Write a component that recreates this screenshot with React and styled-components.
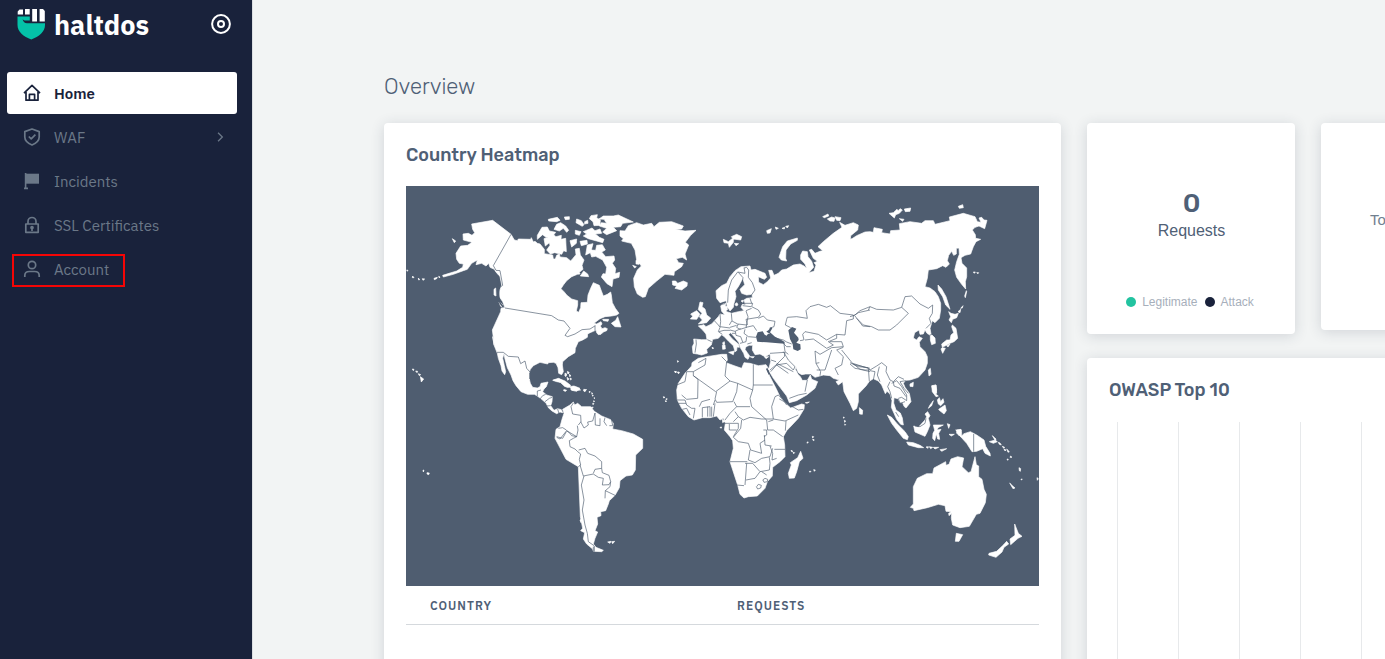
import React from 'react';
import styled, { createGlobalStyle } from 'styled-components';

const Global = createGlobalStyle`
  * { box-sizing: border-box; }
  body { margin: 0; background: #f2f4f4; font-family: "IBM Plex Sans", "Noto Sans", sans-serif; color: #4f6076; }
  h1, h2, p, ul { margin: 0; padding: 0; }
`;

const headingFont = '"Rubik", "Inter", sans-serif';
const plainFont = '"Liberation Sans", Arial, sans-serif';

const Shell = styled.div`
  display: flex;
  height: 100vh;
  overflow: hidden;
`;

const Sidebar = styled.aside`
  flex: 0 0 253px;
  background: #19223b;
  border-right: 1px solid #dcdfe2;
  padding: 0 15px 0 7px;
`;

const Brand = styled.header`
  display: flex;
  align-items: center;
  height: 48px;
  padding: 0 6px 0 10px;
  margin-bottom: 24px;
`;

const BrandName = styled.span`
  flex: 1;
  padding: 2px 0 0 8px;
  color: #fff;
  font-size: 27px;
  font-weight: 700;
  line-height: 46px;
`;

const IconButton = styled.button`
  display: flex;
  padding: 0;
  border: 0;
  background: none;
  color: #fff;
`;

const Menu = styled.ul`
  display: grid;
  gap: 2px;
  list-style: none;
`;

const MenuItem = styled.li`
  position: relative;
`;

const MenuLink = styled.a`
  display: flex;
  align-items: center;
  gap: 13px;
  height: 42px;
  padding: 0 10px 0 16px;
  border-radius: 3px;
  background: ${(p) => (p.$active ? '#fff' : 'transparent')};
  color: ${(p) => (p.$active ? '#19223b' : '#6b7888')};
  font-size: 15px;
  font-weight: ${(p) => (p.$active ? 600 : 400)};
  text-decoration: none;
`;

const MenuLabel = styled.span`
  flex: 1;
`;

const Highlight = styled.span`
  position: absolute;
  left: 5px;
  top: 6px;
  width: 113px;
  height: 33px;
  border: 2px solid #f50505;
  pointer-events: none;
`;

const Main = styled.main`
  flex: 1;
  min-width: 0;
  padding: 72px 0 0 131px;
`;

const PageTitle = styled.h1`
  margin-bottom: 21px;
  font-family: ${headingFont};
  font-size: 22px;
  font-weight: 300;
  line-height: 30px;
`;

const Cards = styled.div`
  display: grid;
  grid-template-columns: minmax(677px, 3fr) minmax(208px, 1fr) minmax(208px, 1fr);
  grid-template-rows: auto 1fr;
  gap: 24px 26px;
  align-items: start;
`;

const Card = styled.section`
  background: #fff;
  border-radius: 4px;
  box-shadow: 0 2px 14px rgba(40, 50, 75, 0.16);
`;

const HeatmapCard = styled(Card)`
  grid-row: 1 / 3;
  min-height: 600px;
  padding: 20px 22px;
`;

const CardTitle = styled.h2`
  font-family: ${headingFont};
  font-size: 18px;
  font-weight: 500;
  line-height: 24px;
`;

const Map = styled.svg`
  display: block;
  width: 100%;
  height: 400px;
  margin-top: 19px;
  background: #4f5d70;
`;

const CountryTable = styled.table`
  width: 100%;
  border-collapse: collapse;
`;

const HeadCell = styled.th`
  width: ${(p) => p.$width};
  height: 38px;
  padding: 2px 24px 0;
  border-bottom: 1px solid #d5d9dd;
  font-size: 12px;
  font-weight: 600;
  letter-spacing: 1px;
  text-align: left;
  text-transform: uppercase;
`;

const StatCard = styled(Card)`
  display: flex;
  flex-direction: column;
  align-items: center;
  height: 211px;
  padding: 64px 0 0 1px;
`;

const StatValue = styled.strong`
  font-family: ${headingFont};
  font-size: 27px;
  font-weight: 500;
  line-height: 33px;
`;

const StatLabel = styled.p`
  font-family: ${plainFont};
  font-size: 16px;
  line-height: 22px;
`;

const Legend = styled.ul`
  display: flex;
  gap: 7px;
  margin-top: 50px;
  padding-right: 3px;
  list-style: none;
`;

const LegendItem = styled.li`
  display: flex;
  align-items: center;
  gap: 6px;
  color: #a7afbb;
  font-family: ${plainFont};
  font-size: 12px;
  line-height: 20px;

  &::before {
    content: '';
    width: 10px;
    height: 10px;
    border-radius: 50%;
    background: ${(p) => p.$color};
  }
`;

const TotalCard = styled(Card)`
  height: 207px;
  padding: 86px 0 0 49px;
  color: #71808f;
  font-family: ${plainFont};
  font-size: 15px;
  line-height: 22px;
`;

const OwaspCard = styled(Card)`
  grid-column: 2 / 4;
  min-height: 360px;
  padding: 20px 22px;
`;

const ChartGrid = styled.div`
  display: grid;
  grid-template-columns: repeat(7, minmax(61px, 1fr));
  height: 300px;
  margin: 20px 0 0 8px;
`;

const GridColumn = styled.span`
  border-left: 1px solid #e7e9eb;
`;

/* The map is drawn on a 1899 x 1200 sheet. Each region keeps its own origin on it. */
const A = [-18, -18]; // North America, west
const B = [282, -18]; // North America, east and Greenland
const C = [792, 12]; // Europe and western Russia
const D = [1332, 12]; // Far East
const E = [402, 552]; // South America
const F = [792, 462]; // Africa and Arabia
const G = [1362, 552]; // Oceania
const H = [252, 447]; // Caribbean
const I = [1152, 402]; // South Asia

const toPoints = ([dx, dy], text) =>
  text.trim().split(/\s+/).map((pair) => {
    const [x, y] = pair.split(',').map(Number);
    return `${x + dx} ${y + dy}`;
  });

const coast = (...legs) => `M${legs.flatMap(([origin, text]) => toPoints(origin, text)).join('L')}Z`;
const shapes = (origin, text) => text.split('/').map((part) => coast([origin, part])).join('');
const lines = (origin, text) => text.split('/').map((part) => `M${toPoints(origin, part).join('L')}`).join('');

const LAND = [
  coast(
    [A, '215,132 278,121 333,163 343,180 352,182 355,177 392,178 394,173 400,186 405,184 412,190 420,192 433,208 433,221 458,225 460,237 466,237 470,226 478,222 480,231 500,233 512,243 518,236 528,224 526,207 538,205 541,225 552,240 546,256 549,268 538,277'],
    [B, '240,282 232,283 215,290 200,302 190,315 183,326 192,335 200,345 215,357 233,362 233,375 229,393 236,397 242,383 243,368 262,367 264,345 272,325 280,308 298,316 303,330 310,348 322,343 332,336 334,345 337,368 346,385 357,400 350,405 335,408 315,410 300,416 288,425 282,430 290,432 303,425 306,432 301,438 306,446 315,443 322,446 320,452 310,456 303,463 295,464 290,458 288,450 280,454 270,458 263,462 262,472 248,480 235,485 226,505 225,518 205,530 188,545 187,555 190,575 185,584 176,580 174,563 168,550 160,547 145,548 143,552 120,547 100,557 91,568 87,580 87,600'],
    [H, '118,132 121,145 128,157 142,159 150,155 153,145 174,141 169,155 162,162 158,170 170,180 187,185 186,200 182,212 192,226 203,221 214,224 218,233 210,231 200,236 186,228 175,218 168,204 155,193 142,183 133,178 113,178 93,170 78,152 69,137 63,120 52,98 44,68 42,55 38,70 43,92 47,110 44,119 36,108 33,92 25,70 22,55 12,30 8,5'],
    [A, '283,495 277,450 302,395 303,385 315,383 308,365 298,350 300,330 305,315 300,290 287,275 283,268 270,262 266,250 258,258 245,250 228,254 232,240 215,250 202,268 190,272 160,283 130,291 128,286 170,273 188,262 190,252 178,250 170,238 168,220 182,198 203,196 216,187 190,180 189,162 205,160 216,166 224,158 218,148']
  ),
  coast(
    [E, '72,130 68,118 90,105 100,96 104,105 113,100 125,110 152,110 163,124 185,138 212,149 220,160 218,177 245,182 280,192 308,208 308,235 287,255 286,300 277,315 258,318 240,332 238,353 225,376 208,392 205,402 197,422 182,425 183,437 171,442 173,462 165,482 173,486 165,505 160,522 168,532 190,541 185,545 160,544 158,537 140,522 130,507 134,488 122,482 128,475 121,440 115,290 78,268 45,205 48,178 60,170 66,148']
  ),
  coast(
    [C, '240,228 243,240 255,238 285,250 290,262 283,268 265,260 266,277 280,284 292,275 302,264 296,241 306,241 312,256 325,250 335,240 350,237 370,225 390,222 402,228 410,235 405,222 392,208 392,195 398,183 412,185 414,200 425,214 431,232 416,248 432,244 438,225 432,218 442,214 430,205 418,180 425,178 435,190 450,184 458,182 444,170 460,155 490,130 516,112 509,97 525,106 550,98 565,105 563,120 542,137 541,148 548,145 560,137 585,126'],
    [D, '60,125 70,127 72,113 97,118 95,128 120,132 122,122 150,120 148,101 180,95 215,100 225,92 250,92 255,103 300,92 298,81 340,70 375,80 382,95 393,97 387,84 395,82 402,90 411,91 404,116 387,108 375,112 367,120 376,134 377,145 392,148 378,155 370,170 362,192 345,196 333,203 336,220 350,234 350,260 346,275 347,297 335,283 320,262 314,240 320,215 328,193 327,174 319,175 319,192 311,196 305,184 296,196 292,212 298,222 288,232 278,227 260,236 235,240 232,265 225,290 240,294 255,305 265,320 272,340 272,360 268,385 255,398 247,392 240,415 243,432 255,444 256,460 245,464 241,450 241,436 231,430 225,420 220,432 210,433 207,420 194,428 190,444 200,450 207,440 217,445 208,457 210,470 225,485 232,500 232,520 225,540 205,562 180,570'],
    [I, '347,181 340,190 345,202 358,220 363,245 348,264 342,259 338,248 330,248 324,236 312,233 311,249 318,270 331,279 337,294 340,315 332,313 320,298 312,280 304,262 306,242 300,222 291,214 286,221 275,195 265,183 250,176 238,184 228,198 205,222 205,245 200,265 190,272 180,250 162,215 158,185 145,195 138,185 148,180 130,175 120,167 100,165 75,172 62,162 47,162 35,164 25,158 18,142'],
    [F, '376,88 384,103 391,110 397,121 412,121 421,105 425,118 443,125 435,145 410,165 380,182 358,188 350,168 330,142 310,115 300,98 296,88 302,65 300,42'],
    [C, '300,492 285,500 270,492 255,494 247,480 248,466 238,466 228,470 225,478 232,488 239,498 234,508 225,502 221,490 211,473 206,457 195,443 186,433 181,428 176,434 187,447 205,462 208,472 201,471 200,482 195,485 190,467 175,453 163,440 155,434 145,445 128,448 124,465 110,478 112,489 95,495 82,492 69,490 67,470 72,460 71,447 95,449 111,449 108,432 98,420 85,408 102,404 108,410 125,402 134,392 145,380 150,372 165,375 155,364 152,348 158,342 167,340 165,355 170,365 185,370 205,365 222,362 213,352 217,343 227,345 222,330 230,325 247,323 246,313 230,315 215,310 210,298 224,284 220,270 217,268 205,290 195,304 198,320 192,340 190,352 180,363 172,350 168,332 150,338 140,325 138,302 155,287 170,280 180,260 195,242 213,230']
  ),
  coast([F, '85,55 110,50 155,43 170,43 172,60 168,68 195,78 215,85 222,68 240,70 265,77 288,74 297,88 291,92 300,110 318,145 330,170 352,195 362,204 395,192 403,194 402,207 385,235 350,272 340,290 344,315 345,350 330,365 308,382 307,408 292,425 285,445 262,468 235,470 222,474 210,463 203,435 193,405 180,365 190,325 188,302 180,290 163,270 166,250 160,235 150,240 140,228 120,233 97,233 72,240 55,230 35,205 22,180 20,150 25,130 45,100 65,78 66,68']),
  shapes(B, '360,152 375,153 385,137 410,128 430,135 455,130 462,140 478,127 515,125 550,138 545,147 525,148 555,153 588,151 572,166 556,187 566,195 555,222 560,240 547,232 529,236 536,248 550,250 545,260 523,275 522,286 495,283 470,303 445,325 436,350 428,352 412,342 403,320 401,295 412,270 424,258 410,240 405,210 394,190 365,183 370,176 360,168/517,303 527,303 533,310 550,303 562,308 561,318 545,330 525,325 530,318 518,315/408,241 420,244 417,253 408,252/398,256 409,260 404,264/600,366 609,368 606,380 615,387 620,405 632,414 620,428 595,432 607,420 598,410 606,400 595,389/590,392 600,403 590,418 571,417 578,409 572,402/353,410 358,425 363,441 345,440 334,430 347,421/308,418 326,418 324,424 310,422/310,108 340,108 355,105 400,126 368,130 362,140 340,142 350,152 320,164 308,156 320,145 298,138 304,128 320,130 312,118 297,117/273,107 292,104 290,114 301,119 300,136 282,137 279,125 268,116/250,155 276,144 285,152 300,147 305,160 286,162 298,172 312,178 308,188 290,183 265,176 250,168 260,162/230,117 244,122 252,134 247,139 228,128/254,125 263,121 264,130 254,132/182,128 197,138 206,151 200,157 190,145 178,153 162,148 170,133/193,111 208,110 208,118 196,119/145,118 172,112 180,121 170,125 146,123/112,166 126,142 142,141 148,153 167,157 157,170 137,171 128,164 112,178/132,176 160,164 168,170 184,166 183,178 197,175 199,215 191,212 185,223 164,218 151,222 140,210 150,196 148,188 136,198/210,182 230,177 229,190 215,201/226,151 243,155 238,166 226,162/240,184 261,181 262,192 244,197/257,225 262,195 279,191 274,210 287,211 290,196 307,194 316,210 305,216 317,230 342,228 344,240 337,250 347,265 345,281 359,277 357,292 339,297 336,320 321,311 304,291 309,281 317,282 320,262 308,240 287,229 275,231 271,218/241,288 251,273 263,282 266,290'),
  shapes(A, '38,288 42,293 37,293/55,294 59,299 56,300/67,296 74,297 69,301/102,295 112,292 110,296 103,299/116,289 120,291 118,294/20,270 24,271 22,274/157,176 167,183 163,188/282,328 287,324 288,348 282,345/297,366 306,372 312,385 302,379/37,567 42,568 40,572/47,573 53,574 51,578/55,581 62,584 58,587/61,590 71,597 64,606'),
  shapes(C, '160,148 175,155 190,143 190,157 178,172 175,160 162,158/184,140 200,133 215,140 212,150 190,147/193,160 206,161 198,167/290,122 304,116 300,129 292,130/316,111 325,115 318,118/336,115 344,112 343,117/347,109 356,107 352,114/331,190 338,170 352,153 382,144 382,151 362,162 348,180 347,205 350,213 334,210 327,202/458,80 474,72 476,78 463,83/472,87 485,81 495,84 492,94 480,93/495,80 513,83 510,92 500,91/158,458 163,455 164,463 159,464/157,466 165,465 166,477 158,478/176,487 193,483 190,494/240,500 253,500 249,504/283,500 296,500 288,506/126,472 131,474 128,477/165,350 172,348 172,360 166,361/195,342 201,338 204,345 198,348/213,333 220,330 219,337/22,512 26,514 23,517/14,545 19,544 18,549/24,546 28,548 25,551'),
  shapes(D, '117,70 130,68 141,58 145,62 150,56 157,60 148,70 137,74 133,84/163,57 182,54 180,64 166,65/148,86 162,88 158,94/325,49 338,44 340,53 328,55/264,285 275,297 288,320 296,345 300,358 287,345 278,320 265,300/296,365 303,370 315,373 325,370 320,383 308,388 304,398 297,390 302,380/307,405 318,415 323,445 312,455 300,460 277,472 275,462 290,450 300,450 303,435 311,428 305,410/276,473 286,475 278,490 273,477/290,467 300,462 294,471/344,318 349,302 350,305 346,323/332,355 339,347 337,354/324,365 332,358 330,368/370,246 376,246 373,250/380,248 386,248 384,251/235,540 241,535 243,553 237,558/246,588 258,585 260,610 250,608/180,582 190,577 189,590 180,589'),
  shapes(E, '40,30 55,25 75,33 92,46 88,50 75,50 62,38 50,32/92,51 110,52 122,60 105,62 93,60/70,60 78,61 74,64/130,61 138,62 133,65/120,450 124,448 123,458/203,516 213,514 210,520/215,515 224,514 218,521/148,63 151,66 148,68/155,68 158,70 156,73/157,75 160,76 158,79/162,83 165,84 163,86/161,92 164,94 161,96/158,100 162,101 159,104/155,111 160,112 155,116/74,15 80,16 77,20/82,8 88,8 84,12/90,24 95,27 91,30/404,4 408,5 406,8/412,6 418,7 416,10/370,80 375,82 371,84/378,86 382,87 378,89/376,92 380,93 377,96'),
  shapes(H, '188,136 208,132 230,145 244,157 230,157 218,143 200,140/244,154 252,153 270,160 260,169 246,166/222,164 230,166 226,169/281,163 290,164 284,168/225,114 231,118 225,120/232,109 237,112 234,114/231,127 237,132 233,136/238,118 243,122 239,125'),
  shapes(F, '392,334 399,355 388,365 380,395 373,414 358,415 355,400 364,375 361,368 383,353/157,238 164,244 158,248/150,262 155,261 153,265/520,231 523,232 521,235/523,241 527,243 524,247/524,252 527,254 525,256/427,289 431,290 428,294/428,297 433,300 430,302/411,306 415,306 412,310/363,331 368,333 366,336/369,337 374,338 371,341/418,394 423,394 420,397/431,389 436,390 433,394/406,188 418,186 411,190/568,203 578,211 577,223 569,222'),
  shapes(I, '292,285 305,292 320,310 345,335 355,350 352,359 340,355 320,330 305,310/350,366 370,368 390,376 401,383 385,383 355,375/371,318 385,322 405,300 410,290 405,282 413,275 420,287 415,295 420,315 412,335 405,349 375,336/425,197 438,195 440,210 437,222 445,228 438,230 427,215/430,242 425,257 415,265 420,255/442,240 448,233 452,245 459,236 462,247 452,257 445,252/446,268 465,255 469,272 462,282 448,271/430,315 460,315 444,323 441,330 453,328 446,340 449,358 443,357 439,342 434,362 428,355 429,340 434,331/472,311 480,314 476,325/477,343 493,343 484,348/497,330 514,330 510,340 515,350 505,345 508,338/408,381 415,380 414,385/418,380 428,382 422,386/430,382 446,382 435,387/450,389 470,386 455,394'),
  shapes(G, '160,415 151,412 160,402 160,350 172,325 200,311 218,311 222,294 257,275 258,286 267,283 273,267 293,260 311,264 306,290 325,308 333,305 345,260 349,284 356,288 356,320 366,328 372,358 379,373 376,398 360,430 349,433 328,469 300,473 278,465 274,445 275,430 267,437 266,430 274,425 258,424 255,407 235,403 202,413 162,422/289,490 308,494 297,514 286,514/464,462 475,490 486,499 474,505 452,524 450,507 465,496/440,514 446,522 432,532 426,546 408,562 386,555 387,550 410,544 430,525/302,200 312,191 331,185 350,195 372,210 377,229 390,250 391,258 375,250 368,236 350,244 336,245 320,220/290,180 303,178 305,190 303,200 290,190/388,215 405,210 412,215 400,220/397,197 408,207 406,212/415,217 420,219 424,225 418,223/427,229 434,232 431,235/432,237 438,240 435,243/440,237 448,245 444,247/452,258 456,262 450,262/441,267 445,268 443,271/477,293 482,296 481,304 478,302/483,327 487,328 484,330/449,339 459,349 465,354 459,356/531,323 535,326 532,331'),
  shapes([3 * -406, 3 * -186], '1269,1410 1272,1411 1270,1416/1281,1418 1288,1419 1286,1424 1281,1422'),
].join('');

const SEAS = [
  shapes(C, '262,455 258,440 263,427 278,424 284,434 290,437 294,431 301,432 289,425 296,420 303,411 307,415 300,427 315,440 330,448 343,455 345,461 325,460 290,457/355,421 366,411 379,416 372,428 385,443 386,450 379,458 391,463 392,478 383,483 370,478 368,463 360,447'),
  shapes(A, '291,285 295,285 297,335 300,365 312,380 309,384 298,370 292,345'),
  shapes(F, '292,83 299,101 296,104 288,87'),
].join('');

const BORDERS = [
  lines(A, '333,163 280,257 288,271 300,272 308,316 298,323/315,384 455,407 475,420 492,423 510,445 495,466 503,470 525,462 546,449 570,447 586,437/585,437 585,452/291,517 310,517 325,529 355,531 362,551 375,543 380,565 391,577'),
  lines(H, '142,183 142,168 153,165/150,192 158,182 167,178/165,200 178,190 187,187/170,213 182,212/203,222 207,236/250,204 243,215 248,237 272,241 273,260 265,270/272,260 282,279 295,270 293,261 308,258 315,234/315,234 316,270 330,272 330,250/345,248 342,260 350,272/358,272 368,272 364,250/205,280 218,278 229,285/200,305 218,310 229,290/229,287 238,293 245,302 260,305 264,285 262,272'),
  lines(E, '50,202 60,207 80,182 110,200/110,200 100,205 88,212 90,230 105,237 113,245 122,252 118,268 122,285 115,290/116,240 135,235 143,250 165,258 185,275 185,295 165,298 160,310/120,285 130,318 160,312 175,322 190,325 187,345 207,344 212,335 207,316 187,308 185,295/132,318 124,345 132,390 127,420 135,465 142,490 145,515 162,527/212,335 210,350 196,362 195,385/196,362 225,376/163,528 163,545/160,545 160,530'),
  lines(C, '173,338 175,300 185,270 203,246 225,250 222,233/222,234 230,232 236,240 235,262 247,278 255,300 243,317/205,247 219,263 217,275/184,370 186,393 203,402 230,405 234,380 228,363/232,405 228,388 265,382 272,372 265,360 245,350 248,340 225,340/245,340 240,325/218,347 243,350/228,362 245,355/265,385 280,378 292,390 315,394 312,410 298,415/230,404 228,412 250,407 260,422/205,402 200,412 210,418 230,412/150,372 152,395 150,410 180,414/133,392 145,405 150,412/150,412 145,425 157,433/147,425 162,421 180,421/178,405 185,393/180,412 200,406/180,420 195,424 212,416/225,418 222,430 235,440 258,442/230,440 228,455 210,460/232,462 245,458/196,424 198,436 212,440 218,456/186,430 196,430/112,449 125,455/78,449 79,462 75,488/165,341 155,343/312,443 340,450 350,456 365,462/335,455 350,470 362,470/342,462 345,485 355,493/350,388 352,382 380,380 412,385 408,362 420,350 445,343 470,352 481,347 510,370 550,375 550,387 530,392 525,435 500,433 470,450 445,433 405,425 398,433 402,450/350,388 346,405 362,413/401,450 390,452/405,450 430,447 470,475 490,465 475,455 500,445 500,433/435,483 450,493 485,473 520,470/520,470 515,455 480,455/550,378 565,368 600,360/555,378 578,408 600,410/300,490 345,487 343,500 318,525 300,540/303,510 318,515/318,525 350,520 370,540 375,530/340,485 355,510 375,530/435,483 438,520 452,545 450,557/438,520 448,518/485,480 465,540 440,540/520,472 500,480 520,500 515,525 495,535 505,555/515,480 550,523 600,535/552,523 570,538 600,545'),
  lines(D, '0,380 15,375 30,362 60,350 80,358 130,360 155,352 175,370 140,405 120,420 85,420 65,410 40,405 20,385/155,352 165,320 185,318 210,342 235,355 248,345 247,370 238,385 243,400 228,415/0,518 25,530 55,533/0,522 15,535 45,540 60,540/240,435 250,432/60,350 55,360'),
  lines(I, '188,130 235,145 240,150 260,138 275,128/235,145 238,184/240,152 255,155 250,180/268,140 262,165 270,185/275,128 290,140 288,155 300,180 310,185 325,170 342,178/300,185 293,200 300,215 305,235/305,190 320,182 335,200 350,225 350,242 335,232 325,235/310,185 312,198 330,205 348,230/325,236 330,250 345,245/347,182 330,185 342,205 355,220/375,318 390,320 405,310 408,295/317,276 326,290'),
  lines(F, '250,73 250,135 308,135/85,68 108,55 105,75 70,95 50,95 45,125 20,135/70,95 70,107 84,118 83,175 50,178 35,165/70,107 137,155 180,123 203,130 200,155 188,185 140,187 135,177 140,155/180,123 165,108 170,65 155,50/203,130 248,150/248,150 240,175 245,200 290,240/248,150 250,135/20,180 45,180 50,195 65,205 75,205 70,235/25,190 48,190/37,208 50,205 60,225/97,232 97,203 120,200 120,230/113,200 113,230/125,200 125,230/130,195 135,180/120,178 95,185 88,200/130,230 135,190/192,185 200,200 180,220 165,240/200,200 240,200/195,215 205,230 190,245/205,230 220,240 240,232 275,237 310,237/163,250 205,250 205,265 190,290/178,252 178,270 200,270/190,292 205,305 235,310 242,330 275,340 270,310 285,300/215,240 212,265 190,292/310,237 345,243 385,225/315,170 325,165 340,180 350,195/315,170 305,200 310,237/328,177 352,190/350,190 385,210 400,208/348,243 346,272/290,240 293,270 310,270 338,290/295,245 310,240/280,270 290,270 290,285 282,290/283,285 285,315 305,318/240,330 235,360 255,368 275,355 300,350 308,325/180,365 232,365/230,370 225,435/200,435 222,437/225,370 248,370 270,395 255,415 228,420/270,395 298,390 300,370 298,352/275,395 290,405/300,318 308,340 306,360 320,355/313,328 345,328/278,420 285,415 293,418 292,425 282,427 279,420/260,440 265,433 274,436 272,444 263,447 259,440/302,95 320,75 355,100/370,95 320,70/395,105 400,120/358,175 385,165 410,160/405,155 412,120'),
  lines(G, '341,192 341,245'),
].join('');

const Glyph = ({ size = 18, width = 1.7, children }) => (
  <svg width={size} height={size} viewBox="0 0 18 18" fill="none" stroke="currentColor" strokeWidth={width} aria-hidden="true">
    {children}
  </svg>
);

const icons = {
  home: <Glyph><path d="M1 9.2 9 1.4l8 7.8M3 8v8.2h12V8M6.4 16v-5.6h5.2V16" strokeLinejoin="round" /></Glyph>,
  shield: <Glyph><path d="M9 1 16.2 3.6V9c0 3.6-3 6.2-7.2 8C4.8 15.2 1.8 12.6 1.8 9V3.6ZM5.8 8.5l2.4 2.4 4.2-4.2" strokeLinejoin="round" /></Glyph>,
  flag: <Glyph width={1.6}><path d="M3 1.7H16v10H3Z" fill="currentColor" stroke="none" /><path d="M2.6 1v16M1 16.4h4" /></Glyph>,
  lock: <Glyph><path d="M2.8 8h12.4v8.3H2.8ZM5 8V5.5a4 4 0 0 1 8 0V8M9 12v3" strokeLinejoin="round" /><circle cx="9" cy="11.5" r="1" fill="currentColor" /></Glyph>,
  user: <Glyph><circle cx="9" cy="5" r="3.7" /><path d="M1.8 17v-1.500c0-2.600 2-4 4.500-4h5.400c2.500 0 4.500 1.400 4.500 4V17" /></Glyph>,
};

const entries = [
  { label: 'Home', icon: icons.home, active: true },
  { label: 'WAF', icon: icons.shield, nested: true },
  { label: 'Incidents', icon: icons.flag },
  { label: 'SSL Certificates', icon: icons.lock },
  { label: 'Account', icon: icons.user, marked: true },
];

const Logo = () => (
  <svg width="29" height="32" viewBox="0 0 29 32" aria-hidden="true">
    <path d="M.5 8.500h12.300v4H8q-1 0-2.400-1.200 1 4 4.400 4h18V17c0 7-6 11.500-13.700 14.500C6.500 28.500.5 24 .5 17Z" fill="#04c2a8" />
    <path d="M2.500 1.500H6v5H.7V3.500ZM8 1h4.700v5.500H8ZM15.200 1h4.800v12.500h-4.800ZM22.600 1H26l1.800 2v10.500h-5.200Z" fill="#fff" />
  </svg>
);

export default function App() {
  return (
    <>
      <Global />
      <Shell>
        <Sidebar>
          <Brand>
            <Logo />
            <BrandName>haltdos</BrandName>
            <IconButton type="button" aria-label="Toggle menu">
              <Glyph size={20} width={1.8}><circle cx="9" cy="9" r="8" /><circle cx="9" cy="9" r="2.7" /></Glyph>
            </IconButton>
          </Brand>
          <nav>
            <Menu>
              {entries.map(({ label, icon, active, nested, marked }) => (
                <MenuItem key={label}>
                  <MenuLink href="#" $active={active}>
                    {icon}
                    <MenuLabel>{label}</MenuLabel>
                    {nested && <Glyph size={14} width={1.7}><path d="m6.500 3.500 5.500 5.500-5.500 5.500" /></Glyph>}
                  </MenuLink>
                  {marked && <Highlight />}
                </MenuItem>
              ))}
            </Menu>
          </nav>
        </Sidebar>
        <Main>
          <PageTitle>Overview</PageTitle>
          <Cards>
            <HeatmapCard>
              <CardTitle>Country Heatmap</CardTitle>
              <Map viewBox="0 0 1899 1200" role="img" aria-label="World map">
                <path d={LAND} fill="#fff" stroke="#fff" strokeWidth="2" strokeLinejoin="round" />
                <path d={SEAS} fill="#4f5d70" />
                <path d={BORDERS} fill="none" stroke="#4f5d70" strokeWidth="2" strokeLinejoin="round" />
              </Map>
              <CountryTable>
                <thead>
                  <tr>
                    <HeadCell $width="48.5%">Country</HeadCell>
                    <HeadCell>Requests</HeadCell>
                  </tr>
                </thead>
              </CountryTable>
            </HeatmapCard>
            <StatCard>
              <StatValue>0</StatValue>
              <StatLabel>Requests</StatLabel>
              <Legend>
                <LegendItem $color="#22c3a0">Legitimate</LegendItem>
                <LegendItem $color="#19223b">Attack</LegendItem>
              </Legend>
            </StatCard>
            <TotalCard>Total Requests</TotalCard>
            <OwaspCard>
              <CardTitle>OWASP Top 10</CardTitle>
              <ChartGrid>
                {Array.from({ length: 7 }, (_, i) => <GridColumn key={i} />)}
              </ChartGrid>
            </OwaspCard>
          </Cards>
        </Main>
      </Shell>
    </>
  );
}
